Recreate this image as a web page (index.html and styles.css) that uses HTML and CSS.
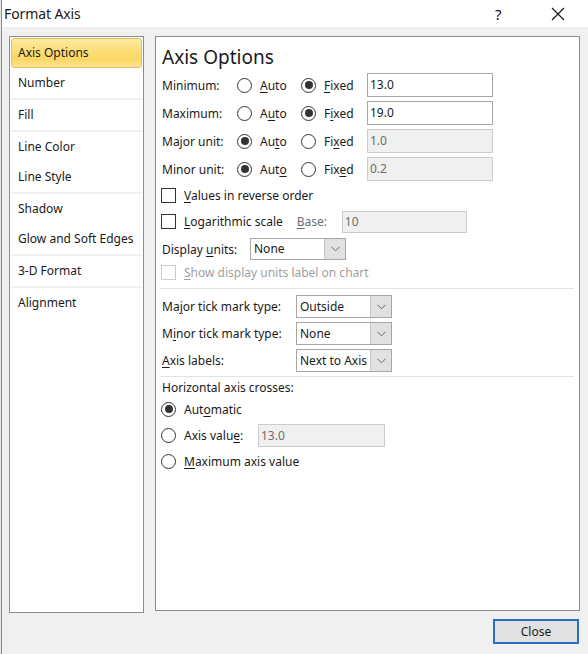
FILE: index.html
```html
<!DOCTYPE html>
<html>
<head>
<meta charset="utf-8">
<link rel="stylesheet" href="styles.css">
</head>
<body>
<div class="window">
  <div class="titlebar">
    <span class="title">Format Axis</span>
    <span class="help">?</span>
    <span class="close-x">
      <svg width="14" height="14" viewBox="0 0 14 14"><path d="M1 1 L13 13 M13 1 L1 13" stroke="#111" stroke-width="1.1" fill="none"/></svg>
    </span>
  </div>
  <div class="main">
    <div class="nav">
      <div class="group">
        <div class="item selected">Axis Options</div>
        <div class="item">Number</div>
      </div>
      <div class="group"><div class="item">Fill</div></div>
      <div class="group">
        <div class="item">Line Color</div>
        <div class="item">Line Style</div>
      </div>
      <div class="group">
        <div class="item">Shadow</div>
        <div class="item">Glow and Soft Edges</div>
      </div>
      <div class="group"><div class="item">3-D Format</div></div>
      <div class="group last"><div class="item">Alignment</div></div>
    </div>
    <div class="content">
      <div class="heading">Axis Options</div>

      <div class="vrow">
        <span class="vlabel">Minimum:</span>
        <span class="opt auto"><span class="radio"></span><span><u>A</u>uto</span></span>
        <span class="opt fixed"><span class="radio on"></span><span><u>F</u>ixed</span></span>
        <span class="textbox">13.0</span>
      </div>
      <div class="vrow">
        <span class="vlabel">Maximum:</span>
        <span class="opt auto"><span class="radio"></span><span>A<u>u</u>to</span></span>
        <span class="opt fixed"><span class="radio on"></span><span>F<u>i</u>xed</span></span>
        <span class="textbox">19.0</span>
      </div>
      <div class="vrow">
        <span class="vlabel">Major unit:</span>
        <span class="opt auto"><span class="radio on"></span><span>Au<u>t</u>o</span></span>
        <span class="opt fixed"><span class="radio"></span><span>Fi<u>x</u>ed</span></span>
        <span class="textbox disabled">1.0</span>
      </div>
      <div class="vrow">
        <span class="vlabel">Minor unit:</span>
        <span class="opt auto"><span class="radio on"></span><span>Aut<u>o</u></span></span>
        <span class="opt fixed"><span class="radio"></span><span>Fix<u>e</u>d</span></span>
        <span class="textbox disabled">0.2</span>
      </div>

      <div class="crow r-values">
        <span class="check"></span><span><u>V</u>alues in reverse order</span>
      </div>
      <div class="crow r-log">
        <span class="check"></span><span><u>L</u>ogarithmic scale</span>
        <span class="base-label"><u>B</u>ase:</span>
        <span class="textbox disabled base">10</span>
      </div>
      <div class="crow r-units">
        <span class="units-label">Display <u>u</u>nits:</span>
        <span class="select units"><span class="sel-text">None</span><span class="sel-btn"><svg width="9" height="6" viewBox="0 0 9 6"><path d="M0.5 0.8 L4.5 4.8 L8.5 0.8" stroke="#666" stroke-width="1" fill="none"/></svg></span></span>
      </div>
      <div class="crow r-show dim">
        <span class="check disabled"></span><span><u>S</u>how display units label on chart</span>
      </div>

      <div class="sep sep1"></div>

      <div class="trow">
        <span class="tlabel">Ma<u>j</u>or tick mark type:</span>
        <span class="select tick"><span class="sel-text">Outside</span><span class="sel-btn"><svg width="9" height="6" viewBox="0 0 9 6"><path d="M0.5 0.8 L4.5 4.8 L8.5 0.8" stroke="#666" stroke-width="1" fill="none"/></svg></span></span>
      </div>
      <div class="trow">
        <span class="tlabel">M<u>i</u>nor tick mark type:</span>
        <span class="select tick"><span class="sel-text">None</span><span class="sel-btn"><svg width="9" height="6" viewBox="0 0 9 6"><path d="M0.5 0.8 L4.5 4.8 L8.5 0.8" stroke="#666" stroke-width="1" fill="none"/></svg></span></span>
      </div>
      <div class="trow">
        <span class="tlabel"><u>A</u>xis labels:</span>
        <span class="select tick"><span class="sel-text">Next to Axis</span><span class="sel-btn"><svg width="9" height="6" viewBox="0 0 9 6"><path d="M0.5 0.8 L4.5 4.8 L8.5 0.8" stroke="#666" stroke-width="1" fill="none"/></svg></span></span>
      </div>

      <div class="sep sep2"></div>

      <div class="hrow">Horizontal axis crosses:</div>
      <div class="rrow">
        <span class="radio on"></span><span>Aut<u>o</u>matic</span>
      </div>
      <div class="rrow r-axisval">
        <span class="radio"></span><span class="av-label">Axis valu<u>e</u>:</span>
        <span class="textbox disabled axisval">13.0</span>
      </div>
      <div class="rrow">
        <span class="radio"></span><span><u>M</u>aximum axis value</span>
      </div>
    </div>
  </div>
  <div class="footer">
    <span class="button">Close</span>
  </div>
</div>
</body>
</html>
```

FILE: styles.css
```css
html, body {
  margin: 0;
  padding: 0;
  background: #e6e6e6;
}
body {
  width: 588px;
  height: 654px;
  overflow: hidden;
  font-family: "Noto Sans", "Open Sans", sans-serif;
  font-size: 12px;
  color: #1a1a1a;
}
u { text-decoration: underline; text-underline-offset: 2px; text-decoration-thickness: 1px; }

.window {
  margin-left: 1px;
  border-left: 1px solid #8a8a8a;
  width: 586px;
  height: 654px;
  background: #f0f0f0;
  display: flex;
  flex-direction: column;
}
.titlebar {
  height: 27px;
  background: #fff;
  display: flex;
  align-items: center;
  flex-shrink: 0;
}
.title {
  font-size: 14px;
  padding-left: 2px;
  flex: 1;
  letter-spacing: -0.1px;
}
.help {
  font-size: 15px;
  width: 14px;
  margin-right: 42px;
  color: #111;
}
.close-x {
  width: 14px;
  height: 14px;
  margin-right: 23px;
  display: flex;
}

.main {
  display: flex;
  gap: 11px;
  padding: 9px 8px 0 7px;
  height: 577px;
  flex-shrink: 0;
}
.nav {
  width: 131px;
  flex-shrink: 0;
  border: 1px solid #8c8c8c;
  background: #fff;
  padding: 1px;
  box-sizing: content-box;
  height: 573px;
}
.group {
  border-bottom: 2px solid #f0f0f0;
}
.group.last { border-bottom: none; }
.item {
  height: 30px;
  line-height: 30px;
  padding-left: 7px;
  white-space: nowrap;
  box-sizing: border-box;
}
.item.selected {
  border: 1px solid #e3bf5e;
  border-radius: 3px;
  padding-left: 6px;
  line-height: 28px;
  background: linear-gradient(#fdeaa2 0%, #fcdc74 45%, #fbd863 75%, #fde49a 100%);
}

.content {
  flex: 1;
  border: 1px solid #8c8c8c;
  background: #fff;
  padding: 6px 6px 0 6px;
  height: 575px;
  box-sizing: border-box;
}
.heading {
  font-size: 19px;
  height: 28px;
  line-height: 28px;
}

.vrow {
  display: flex;
  align-items: center;
  height: 28px;
}
.vlabel { width: 75px; }
.opt {
  display: flex;
  align-items: center;
  gap: 8px;
}
.opt.auto { width: 64px; }
.opt.fixed { width: 66px; }

.radio {
  width: 13px;
  height: 13px;
  border: 1px solid #333;
  border-radius: 50%;
  background: #fff;
  display: inline-flex;
  align-items: center;
  justify-content: center;
  flex-shrink: 0;
}
.radio.on::after {
  content: "";
  width: 8px;
  height: 8px;
  border-radius: 50%;
  background: #333;
}

.textbox {
  width: 126px;
  height: 24px;
  box-sizing: border-box;
  border: 1px solid #a6a6a6;
  background: #fff;
  padding-left: 2px;
  line-height: 22px;
}
.textbox.disabled {
  background: #f0f0f0;
  border-color: #cccccc;
  color: #6d6d6d;
}

.crow {
  display: flex;
  align-items: center;
  gap: 8px;
}
.check {
  width: 13px;
  height: 13px;
  border: 1px solid #333;
  background: #fff;
  flex-shrink: 0;
  margin-left: -1px;
}
.check.disabled { border-color: #cccccc; }
.dim { color: #a0a0a0; }

.r-values { height: 25px; }
.r-log { height: 27px; }
.r-units { height: 28px; }
.r-show { height: 18px; }

.base-label {
  margin-left: 6px;
  color: #6d6d6d;
  width: 37px;
}
.textbox.base {
  width: 125px;
  height: 22px;
  line-height: 20px;
}
.units-label { width: 88px; margin-right: -8px; }

.select {
  display: flex;
  width: 96px;
  height: 22px;
  box-sizing: border-box;
  border: 1px solid #a6a6a6;
  background: #fff;
}
.sel-text {
  flex: 1;
  padding-left: 3px;
  line-height: 20px;
  white-space: nowrap;
  overflow: hidden;
}
.sel-btn {
  width: 20px;
  background: #e1e1e1;
  border-left: 1px solid #c4c4c4;
  display: flex;
  align-items: center;
  justify-content: center;
}
.select.tick { height: 23px; }
.select.tick .sel-text { line-height: 21px; }

.sep {
  height: 1px;
  background: #e3e3e3;
  margin: 0 -1px 0 -2px;
}
.sep1 { margin-top: 7px; margin-bottom: 4px; }
.sep2 { margin-top: 2px; }

.trow {
  display: flex;
  align-items: center;
  height: 27px;
}
.tlabel { width: 134px; }

.hrow {
  height: 19px;
  line-height: 22px;
}
.rrow {
  display: flex;
  align-items: center;
  gap: 8px;
  height: 26px;
}
.rrow .radio { margin-left: -1px; }
.av-label { width: 66px; }
.textbox.axisval {
  width: 127px;
  height: 23px;
  line-height: 21px;
}

.footer {
  display: flex;
  justify-content: flex-end;
  padding: 6px 9px 0 0;
}
.button {
  width: 86px;
  height: 25px;
  box-sizing: border-box;
  border: 2px solid #2a6ebf;
  background: #e1e1e1;
  text-align: center;
  line-height: 21px;
}
```
